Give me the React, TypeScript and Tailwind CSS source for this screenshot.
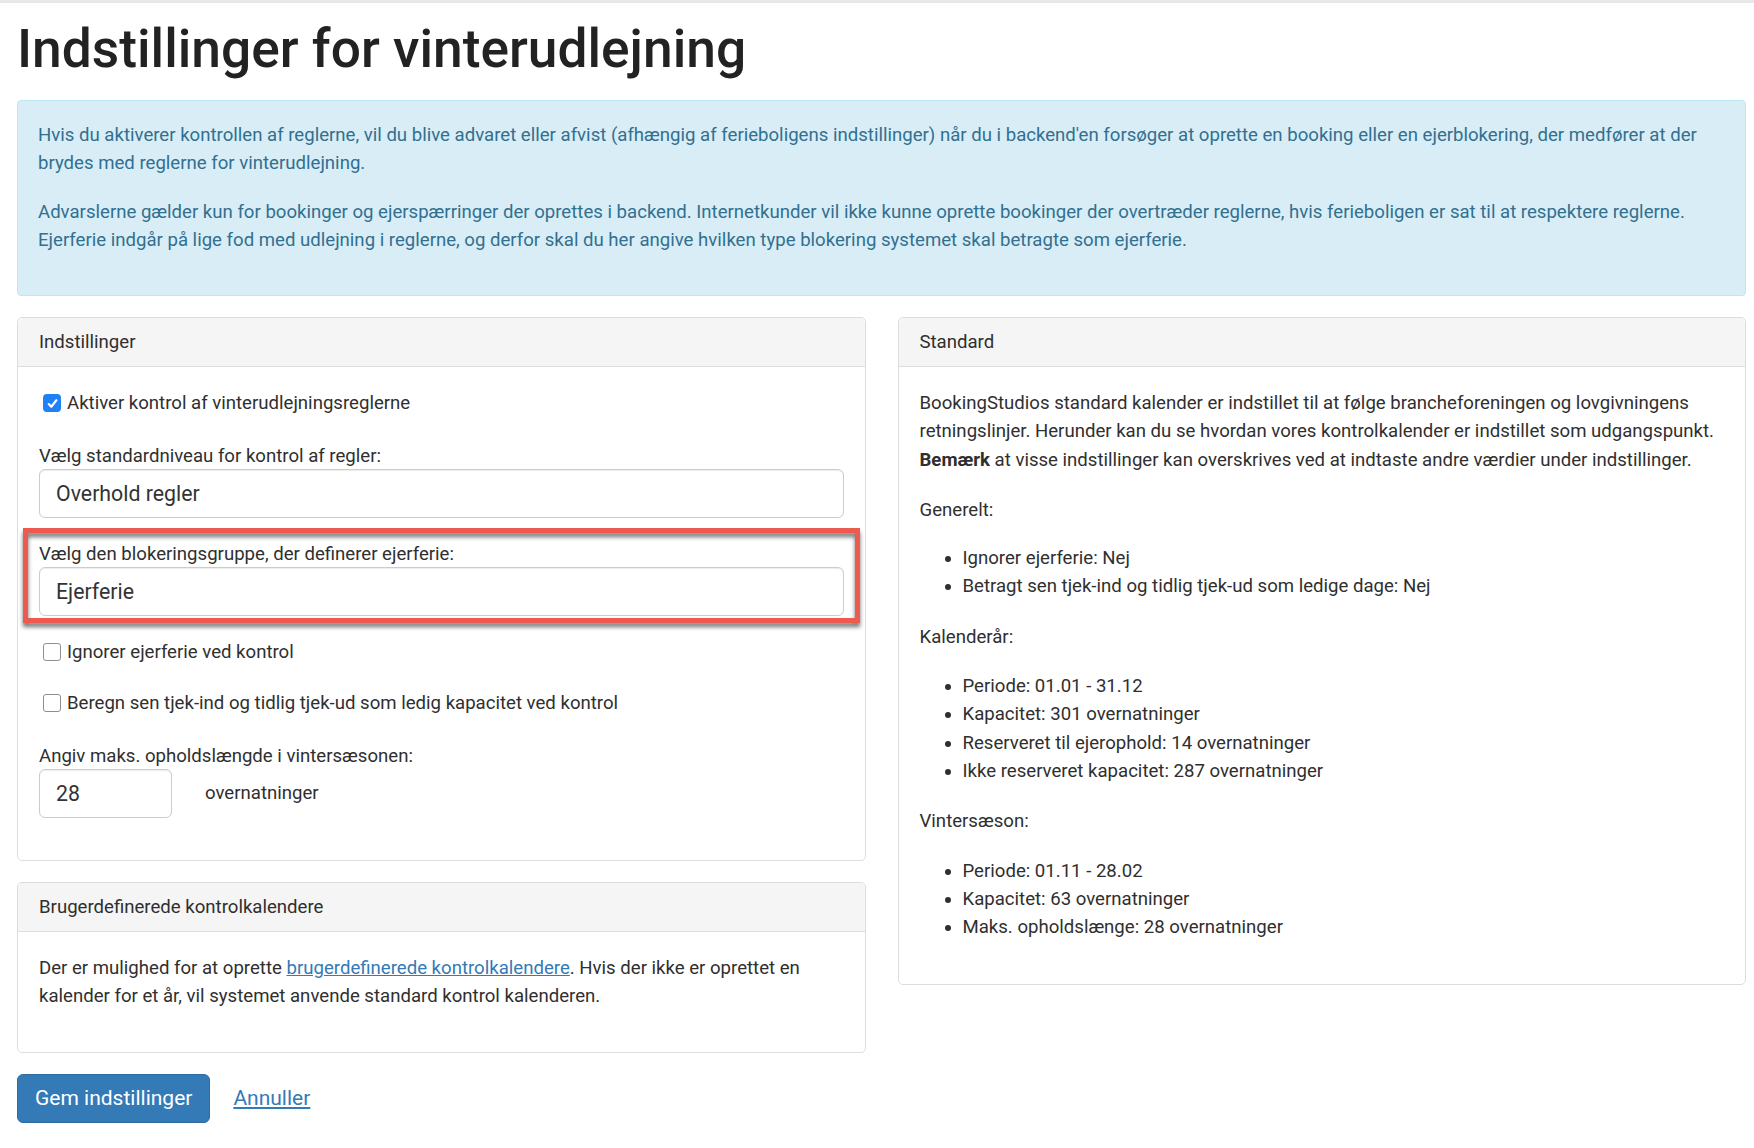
import React from "react";

const Checkbox = ({ checked }: { checked?: boolean }) =>
  checked ? (
    <span className="flex h-[18px] w-[18px] shrink-0 items-center justify-center rounded-[4px] bg-[#1f81f5]">
      <svg viewBox="0 0 12 12" className="h-[13px] w-[13px]" fill="none" stroke="white" strokeWidth="2" strokeLinecap="round" strokeLinejoin="round">
        <path d="M2.5 6.5l2.4 2.5L9.6 3" />
      </svg>
    </span>
  ) : (
    <span className="h-[18px] w-[18px] shrink-0 rounded-[3px] border border-[#8e8e8e] bg-white" />
  );

const CheckRow = ({ checked, label, className = "" }: { checked?: boolean; label: string; className?: string }) => (
  <label className={`flex items-center gap-[6px] pl-[4px] leading-[28px] ${className}`}>
    <Checkbox checked={checked} />
    <span>{label}</span>
  </label>
);

const Field = ({ value, className = "" }: { value: string; className?: string }) => (
  <div
    className={`flex h-[49px] items-center rounded-[6px] border border-[#cccccc] bg-white px-[16px] text-[21.3px] text-[#333] shadow-[inset_0_1px_1px_rgba(0,0,0,0.075)] ${className}`}
  >
    {value}
  </div>
);

const PanelHeader = ({ title }: { title: string }) => (
  <div className="rounded-t-[5px] border-b border-[#dddddd] bg-[#f5f5f5] px-[21px] py-[10px] leading-[28px]">{title}</div>
);

export default function App() {
  return (
    <div className="min-h-screen bg-white font-['Roboto',sans-serif] text-[18.6px] text-[#2f2f2f]">
      <div className="h-[3px] bg-[#e7e7e7]" />
      <div className="pl-[17px] pr-[8px] pb-[40px]">
        <h1 className="mt-[16px] text-[53.3px] font-medium leading-[60px] text-[#222]">Indstillinger for vinterudlejning</h1>

        {/* Info alert */}
        <div className="mt-[21px] rounded-[4px] border border-[#bce8f1] bg-[#d9edf7] px-[20px] pt-[20px] pb-[41px] leading-[28px] text-[#31708f]">
          <p className="mb-[21px] whitespace-nowrap">
            Hvis du aktiverer kontrollen af reglerne, vil du blive advaret eller afvist (afhængig af ferieboligens indstillinger) når du i backend'en forsøger at oprette en booking eller en ejerblokering, der medfører at der
            <br />
            brydes med reglerne for vinterudlejning.
          </p>
          <p className="whitespace-nowrap">
            Advarslerne gælder kun for bookinger og ejerspærringer der oprettes i backend. Internetkunder vil ikke kunne oprette bookinger der overtræder reglerne, hvis ferieboligen er sat til at respektere reglerne.
            <br />
            Ejerferie indgår på lige fod med udlejning i reglerne, og derfor skal du her angive hvilken type blokering systemet skal betragte som ejerferie.
          </p>
        </div>

        <div className="mt-[21px] grid grid-cols-2 items-start gap-[32px]">
          {/* Left column */}
          <div className="flex flex-col gap-[21px]">
            <div className="rounded-[5px] border border-[#dddddd] bg-white">
              <PanelHeader title="Indstillinger" />
              <div className="px-[21px] pt-[22px] pb-[42px]">
                <CheckRow checked label="Aktiver kontrol af vinterudlejningsreglerne" />

                <div className="mt-[26px]">
                  <div className="leading-[26px]">Vælg standardniveau for kontrol af regler:</div>
                  <Field value="Overhold regler" />
                </div>

                <div className="relative mt-[23px]">
                  <div className="leading-[26px]">Vælg den blokeringsgruppe, der definerer ejerferie:</div>
                  <Field value="Ejerferie" />
                  <div className="pointer-events-none absolute -top-[13px] -bottom-[7px] -left-[16px] -right-[16px] border-[5px] border-[#ec5a50] drop-shadow-[0_4px_2px_rgba(0,0,0,0.55)]" />
                </div>

                <CheckRow className="mt-[22px]" label="Ignorer ejerferie ved kontrol" />
                <CheckRow className="mt-[23px]" label="Beregn sen tjek-ind og tidlig tjek-ud som ledig kapacitet ved kontrol" />

                <div className="mt-[26px]">
                  <div className="leading-[26px]">Angiv maks. opholdslængde i vintersæsonen:</div>
                  <div className="flex items-center">
                    <Field value="28" className="w-[133px]" />
                    <span className="ml-[33px]">overnatninger</span>
                  </div>
                </div>
              </div>
            </div>

            <div className="rounded-[5px] border border-[#dddddd] bg-white">
              <PanelHeader title="Brugerdefinerede kontrolkalendere" />
              <div className="px-[21px] pt-[22px] pb-[42px] leading-[28px]">
                <p className="whitespace-nowrap">
                  Der er mulighed for at oprette{" "}
                  <a href="#" className="text-[#337ab7] underline">
                    brugerdefinerede kontrolkalendere
                  </a>
                  . Hvis der ikke er oprettet en
                  <br />
                  kalender for et år, vil systemet anvende standard kontrol kalenderen.
                </p>
              </div>
            </div>

            <div className="flex items-center">
              <button className="h-[49px] rounded-[6px] border border-[#2e6da4] bg-[#337ab7] px-[17px] text-[21px] text-white">
                Gem indstillinger
              </button>
              <a href="#" className="ml-[23px] text-[21px] text-[#337ab7] underline">
                Annuller
              </a>
            </div>
          </div>

          {/* Right column */}
          <div className="rounded-[5px] border border-[#dddddd] bg-white">
            <PanelHeader title="Standard" />
            <div className="px-[21px] pt-[22px] pb-[43px] leading-[28.3px]">
              <p className="mb-[22px] whitespace-nowrap">
                BookingStudios standard kalender er indstillet til at følge brancheforeningen og lovgivningens
                <br />
                retningslinjer. Herunder kan du se hvordan vores kontrolkalender er indstillet som udgangspunkt.
                <br />
                <b className="font-bold">Bemærk</b> at visse indstillinger kan overskrives ved at indtaste andre værdier under indstillinger.
              </p>

              <p className="mb-[20px]">Generelt:</p>
              <ul className="mb-[22px] list-disc pl-[43px]">
                <li>Ignorer ejerferie: Nej</li>
                <li>Betragt sen tjek-ind og tidlig tjek-ud som ledige dage: Nej</li>
              </ul>

              <p className="mb-[21px]">Kalenderår:</p>
              <ul className="mb-[22px] list-disc pl-[43px]">
                <li>Periode: 01.01 - 31.12</li>
                <li>Kapacitet: 301 overnatninger</li>
                <li>Reserveret til ejerophold: 14 overnatninger</li>
                <li>Ikke reserveret kapacitet: 287 overnatninger</li>
              </ul>

              <p className="mb-[21px]">Vintersæson:</p>
              <ul className="list-disc pl-[43px]">
                <li>Periode: 01.11 - 28.02</li>
                <li>Kapacitet: 63 overnatninger</li>
                <li>Maks. opholdslænge: 28 overnatninger</li>
              </ul>
            </div>
          </div>
        </div>
      </div>
    </div>
  );
}
